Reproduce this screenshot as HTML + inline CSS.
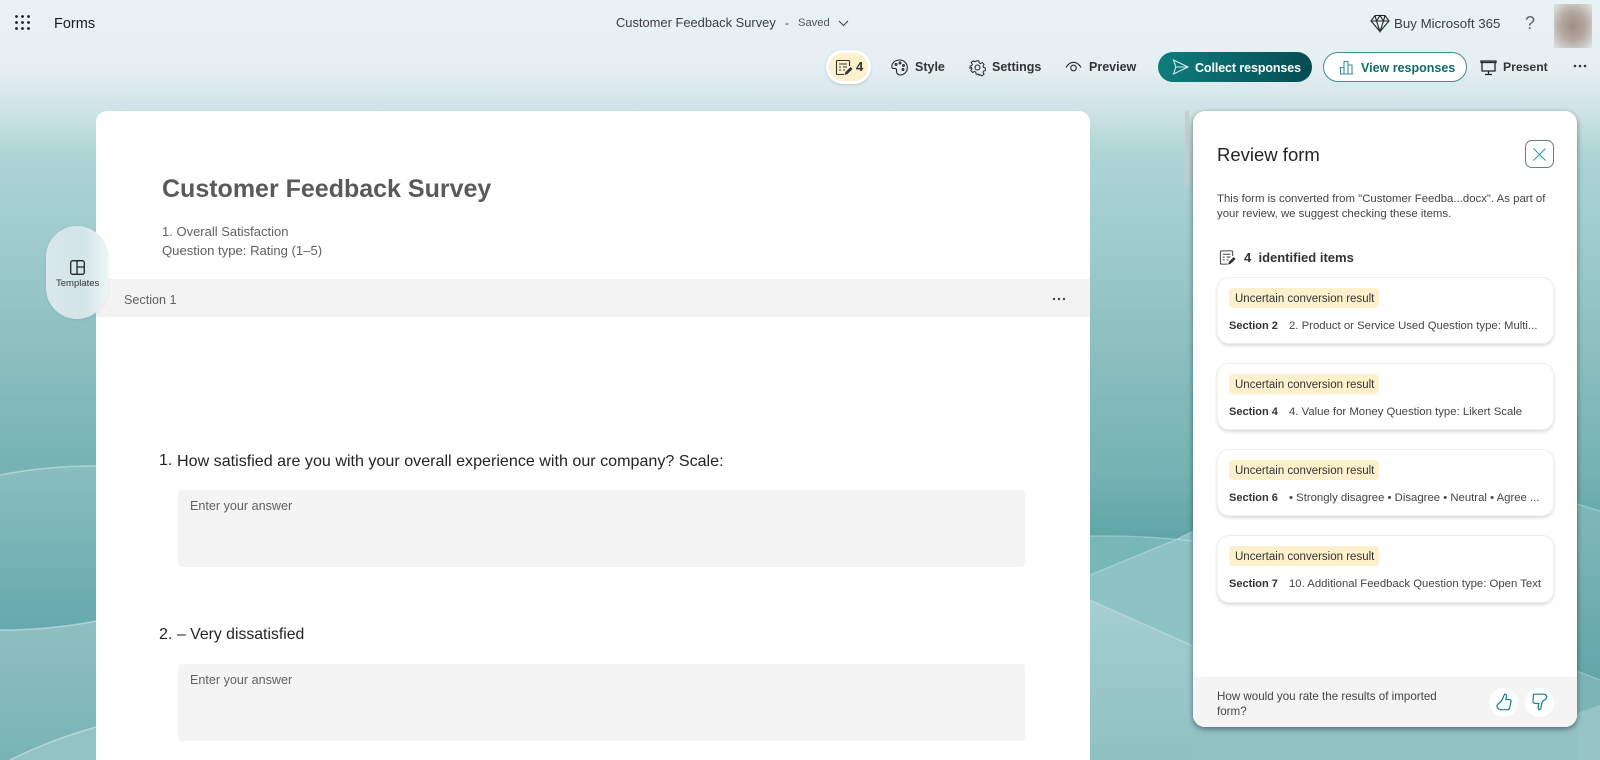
<!DOCTYPE html>
<html lang="en"><head><meta charset="utf-8"><title>Customer Feedback Survey</title>
<style>
*{box-sizing:border-box}
html,body{margin:0;padding:0;width:1600px;height:760px;overflow:hidden;background:#8fc1c3}
body{font-family:"Liberation Sans",sans-serif;position:relative;color:#242424}
.t{position:absolute;white-space:nowrap;line-height:18px}
.abs{position:absolute}
svg.ic{position:absolute;overflow:visible;fill:none;stroke:#242424;stroke-width:1.1}
.card{position:absolute;left:1217px;width:337px;height:67px;background:#fff;border:1px solid #f0f0f0;border-radius:12px;box-shadow:0 2px 3px rgba(0,0,0,.14)}
.tag{position:absolute;left:11px;top:10px;width:150px;height:20px;background:#fdf0cd;border-radius:4px;font-size:11.5px;line-height:22px;padding-left:6px;color:#333;white-space:nowrap}
.sec{position:absolute;left:11px;top:39px;font-size:11px;font-weight:bold;line-height:18px;color:#333;white-space:nowrap}
.val{position:absolute;left:71px;top:39px;font-size:11.35px;line-height:18px;color:#444;white-space:nowrap}
.box{position:absolute;left:178px;width:847px;height:77px;background:#f4f4f4;border-radius:4px}
.b{font-size:12.5px;font-weight:bold;color:#333}
</style></head><body>
<svg class="abs" style="left:0;top:0" width="1600" height="760" viewBox="0 0 1600 760">
<defs>
<linearGradient id="g0" x1="0" y1="0" x2="0" y2="760" gradientUnits="userSpaceOnUse">
<stop offset="0" stop-color="#e8f1f4"/><stop offset=".09" stop-color="#e5eff2"/><stop offset=".145" stop-color="#cfe3e6"/><stop offset=".2" stop-color="#afd5d5"/><stop offset=".45" stop-color="#8dc0c1"/><stop offset=".625" stop-color="#74b2b4"/><stop offset=".71" stop-color="#5fa5a8"/><stop offset="1" stop-color="#5fa5a8"/>
</linearGradient>
<linearGradient id="g1" x1="0" y1="466" x2="0" y2="630" gradientUnits="userSpaceOnUse"><stop offset="0" stop-color="#89bebf"/><stop offset="1" stop-color="#66a9ad"/></linearGradient>
<linearGradient id="g2" x1="0" y1="622" x2="0" y2="760" gradientUnits="userSpaceOnUse"><stop offset="0" stop-color="#8fbfc2"/><stop offset="1" stop-color="#78b4b6"/></linearGradient>
<linearGradient id="g3" x1="0" y1="600" x2="0" y2="760" gradientUnits="userSpaceOnUse"><stop offset="0" stop-color="#a5ced1"/><stop offset="1" stop-color="#8fc1c3"/></linearGradient>
<linearGradient id="g4" x1="0" y1="505" x2="0" y2="680" gradientUnits="userSpaceOnUse"><stop offset="0" stop-color="#80b8ba"/><stop offset="1" stop-color="#62a6a9"/></linearGradient>
</defs>
<rect width="1600" height="760" fill="url(#g0)"/>
<path d="M0 475Q45 466 96 466V760H0Z" fill="url(#g1)"/>
<path d="M0 630Q50 630 96 621V760H0Z" fill="url(#g2)"/>
<path d="M10 760Q50 740 96 727V760Z" fill="#94c3c5"/>
<path d="M0 475Q45 466 96 466M0 630Q50 630 96 621M10 760Q50 740 96 727" fill="none" stroke="#fff" stroke-opacity=".38" stroke-width="1.5"/>
<path d="M1090 536Q1140 535 1193 541V760H1090Z" fill="#78b7b8"/>
<path d="M1090 575L1175 540L1193 531V760H1090Z" fill="#8ec3c5"/>
<path d="M1090 600L1193 646V760H1090Z" fill="url(#g3)"/>
<path d="M1090 536Q1140 535 1193 541M1090 575L1175 540L1193 531M1090 600L1193 646" fill="none" stroke="#fff" stroke-opacity=".3" stroke-width="1.2"/>
<rect x="1193" y="700" width="384" height="60" fill="#92c2c4"/>
<path d="M1577 504L1600 511V680L1577 671Z" fill="url(#g4)"/>
<path d="M1577 671L1600 680V760H1577Z" fill="#7db5b7"/>
<path d="M1577 713L1600 705V760H1577Z" fill="#97c4c6"/>
<path d="M1577 504L1600 511M1577 671L1600 680" fill="none" stroke="#fff" stroke-opacity=".3" stroke-width="1.2"/>
</svg>

<!-- top bar -->
<svg class="abs" style="left:15px;top:15px" width="15" height="15" viewBox="0 0 15 15" fill="#1c1c1c"><circle cx="1.500" cy="1.500" r="1.400"/><circle cx="7.500" cy="1.500" r="1.400"/><circle cx="13.500" cy="1.500" r="1.400"/><circle cx="1.500" cy="7.500" r="1.400"/><circle cx="7.500" cy="7.500" r="1.400"/><circle cx="13.500" cy="7.500" r="1.400"/><circle cx="1.500" cy="13.500" r="1.400"/><circle cx="7.500" cy="13.500" r="1.400"/><circle cx="13.500" cy="13.500" r="1.400"/></svg>
<div class="t" style="left:54px;top:15px;font-size:14.5px;font-weight:500;color:#1a1a1a">Forms</div>
<div class="t" style="left:616px;top:14px;font-size:12.9px;color:#3d3d3d">Customer Feedback Survey</div>
<div class="t" style="left:785px;top:14px;font-size:12px;color:#444">-</div>
<div class="t" style="left:798px;top:14px;font-size:11.2px;color:#555">Saved</div>
<svg class="ic" style="left:838px;top:20px;stroke:#444" width="11" height="7" viewBox="0 0 11 7"><path d="M1 1l4.500 4.500L10 1"/></svg>

<svg class="ic" style="left:1370px;top:14px" width="20" height="19" viewBox="0 0 20 19"><path d="M5 1.500h10l4 5.500-9 10.500L1 7zM1 7h18M6.500 7L10 17.500 13.500 7M5 1.500L6.500 7 10 1.500 13.500 7 15 1.500"/></svg>
<div class="t" style="left:1394px;top:15px;font-size:13.3px;color:#3d3d3d">Buy Microsoft 365</div>
<div class="t" style="left:1525px;top:12px;font-size:18px;line-height:22px;color:#666">?</div>
<div class="abs" style="left:1554px;top:4px;width:38px;height:44px;background:radial-gradient(ellipse at 50% 50%,#a08e84 0%,#b3a79f 45%,#dfe5e6 100%)"></div>

<div class="abs" style="left:826px;top:50px;width:45px;height:34px;background:#fdf0cd;border:3px solid #fff;border-radius:17px;box-shadow:0 1px 3px rgba(0,0,0,.15)"></div>
<svg class="ic" style="left:835px;top:60px;stroke:#333" width="18" height="16" viewBox="0 0 18 16"><path d="M9 14.500H2.500a1 1 0 0 1-1-1V1.500a1 1 0 0 1 1-1h11a1 1 0 0 1 1 1V6M4 4h8M4 7h2M8 7h4M4 10h2M8 10h2"/><path d="M9.500 15l1-3 5-5 2 2-5 5z" fill="#333" stroke="none"/></svg>
<div class="t" style="left:856px;top:58px;font-size:13px;font-weight:bold;color:#333">4</div>

<svg class="ic" style="left:891px;top:59px" width="17" height="17" viewBox="0 0 17 17"><path d="M8.500 1C4 1 .8 4 .8 7.800c0 1.500 1.400 2 2.400 1.700 1.500-.4 2.700.5 2.300 2-.4 1.700.8 4.500 3.500 4.500 4 0 7.300-3.300 7.300-7.300S13.500 1 8.500 1z"/><circle cx="5" cy="5.500" r=".9"/><circle cx="9" cy="4" r=".9"/><circle cx="12.500" cy="6.500" r=".9"/><circle cx="12" cy="10.500" r=".9"/></svg>
<div class="t b" style="left:915px;top:58px">Style</div>

<svg class="ic" style="left:969px;top:59px" width="17" height="17" viewBox="0 0 17 17"><circle cx="8.500" cy="8.500" r="2.500"/><path d="M7 1h3l.5 2.300 1.500.7 2-1.200 2 2.200-1.200 2 .6 1.500 2 .5v3l-2 .5-.6 1.500 1.200 2-2.200 2-2-1.200-1.300.6L10 16H7l-.5-2.300-1.500-.7-2 1.200-2-2.200 1.200-2-.6-1.500L0 9.500v-2.600l2-.5.600-1.500-1.200-2 2.200-2 2 1.200 1.300-.6z" transform="translate(1 1) scale(.88)"/></svg>
<div class="t b" style="left:992px;top:58px">Settings</div>

<svg class="ic" style="left:1065px;top:61px" width="17" height="11" viewBox="0 0 17 11"><path d="M1 6.500C3 3 5.500 1.300 8.500 1.300S14 3 16 6.500"/><circle cx="8.500" cy="7" r="2.800"/></svg>
<div class="t b" style="left:1089px;top:58px">Preview</div>

<div class="abs" style="left:1158px;top:52px;width:154px;height:30px;border-radius:15px;background:linear-gradient(90deg,#0e7d7c,#064c52)"></div>
<svg class="ic" style="left:1172px;top:59px;stroke:#d5ecec" width="17" height="16" viewBox="0 0 17 16"><path d="M1.500 1l14.500 7-14.500 7L3.800 8zM3.800 8H16"/></svg>
<div class="t" style="left:1195px;top:59px;font-size:12.5px;letter-spacing:-.1px;font-weight:bold;color:#fff">Collect responses</div>

<div class="abs" style="left:1323px;top:52px;width:144px;height:30px;border-radius:15px;background:#fff;border:1px solid #3f8f90"></div>
<svg class="ic" style="left:1339px;top:60px;stroke:#3f8f90" width="15" height="15" viewBox="0 0 15 15"><path d="M1 14h13M1.500 14V7.500h3.500V14M5 14V1.500h4V14M9 14V5h4V14"/></svg>
<div class="t" style="left:1361px;top:59px;font-size:12.5px;font-weight:bold;color:#0f6c6c">View responses</div>

<svg class="ic" style="left:1480px;top:60px;stroke-width:1.300" width="17" height="16" viewBox="0 0 17 16"><path d="M1 1h15v1.500H1zM2 2.500V11h13V2.500M8.500 11v3.500M5 14.500h7"/></svg>
<div class="t b" style="left:1503px;top:58px;font-size:12.2px">Present</div>
<svg class="abs" style="left:1573px;top:64px" width="14" height="4" viewBox="0 0 14 4" fill="#333"><circle cx="2" cy="2" r="1.300"/><circle cx="7" cy="2" r="1.300"/><circle cx="12" cy="2" r="1.300"/></svg>

<!-- form card -->
<div class="abs" style="left:96px;top:111px;width:994px;height:660px;background:#fff;border-radius:11px"></div>
<div class="t" style="left:162px;top:171px;font-size:25px;line-height:36px;font-weight:bold;color:#5a5a5a">Customer Feedback Survey</div>
<div class="t" style="left:162px;top:223px;font-size:13px;color:#616161">1. Overall Satisfaction</div>
<div class="t" style="left:162px;top:242px;font-size:13.1px;color:#616161">Question type: Rating (1–5)</div>
<div class="abs" style="left:96px;top:279px;width:994px;height:38px;background:#f3f3f3"></div>
<div class="t" style="left:124px;top:291px;font-size:12.6px;color:#616161">Section 1</div>
<svg class="abs" style="left:1052px;top:297px" width="14" height="4" viewBox="0 0 14 4" fill="#444"><circle cx="2" cy="2" r="1.200"/><circle cx="7" cy="2" r="1.200"/><circle cx="12" cy="2" r="1.200"/></svg>

<div class="t" style="left:159px;top:451px;font-size:16px;line-height:20px;color:#242424">1.</div>
<div class="t" style="left:177px;top:451px;font-size:16.1px;line-height:20px;color:#242424">How satisfied are you with your overall experience with our company? Scale:</div>
<div class="box" style="top:490px"></div>
<div class="t" style="left:190px;top:497px;font-size:12.6px;color:#616161">Enter your answer</div>
<div class="t" style="left:159px;top:625px;font-size:16px;line-height:20px;color:#242424">2.</div>
<div class="t" style="left:177px;top:625px;font-size:15.8px;line-height:20px;color:#242424">– Very dissatisfied</div>
<div class="box" style="top:664px"></div>
<div class="t" style="left:190px;top:671px;font-size:12.6px;color:#616161">Enter your answer</div>

<!-- templates pill -->
<div class="abs" style="left:46px;top:226px;width:62px;height:93px;border-radius:31px;background:linear-gradient(90deg,#d9e8ea,#d2e5e7 60%,#edf4f5);box-shadow:0 1px 3px rgba(0,0,0,.08)"></div>
<svg class="ic" style="left:70px;top:260px;stroke-width:1.300" width="15" height="15" viewBox="0 0 15 15"><rect x=".7" y=".7" width="13.600" height="13.600" rx="2"/><path d="M7 .7v13.600M7 7h7.300"/></svg>
<div class="t" style="left:56px;top:276px;font-size:9.5px;line-height:16px;color:#333">Templates</div>

<!-- scrollbar -->
<div class="abs" style="left:1185px;top:111px;width:4px;height:75px;background:#c6cdcd;border-radius:2px"></div>

<!-- review panel -->
<div class="abs" style="left:1193px;top:111px;width:384px;height:616px;background:#fff;border-radius:12px;overflow:hidden;box-shadow:0 2px 6px rgba(0,0,0,.45)">
<div class="abs" style="left:0;top:566px;width:384px;height:50px;background:#f4f4f4"></div>
</div>
<div class="t" style="left:1217px;top:143px;font-size:18.5px;line-height:24px;color:#242424">Review form</div>
<div class="abs" style="left:1525px;top:140px;width:29px;height:28px;border:1px solid #6d7b7b;border-radius:7px"></div>
<svg class="ic" style="left:1533px;top:148px;stroke:#2a9494;stroke-width:.9" width="13" height="13" viewBox="0 0 13 13"><path d="M.5.5l12 12M12.500.5l-12 12"/></svg>
<div class="t" style="left:1217px;top:190px;font-size:11.4px;color:#444">This form is converted from "Customer Feedba...docx". As part of</div>
<div class="t" style="left:1217px;top:205px;font-size:11.4px;color:#444">your review, we suggest checking these items.</div>
<svg class="ic" style="left:1219px;top:250px;stroke:#444" width="17" height="16" viewBox="0 0 18 16"><path d="M9 14.500H2.500a1 1 0 0 1-1-1V1.500a1 1 0 0 1 1-1h11a1 1 0 0 1 1 1V6M4 4h8M4 7h2M8 7h4M4 10h2M8 10h2"/><path d="M9.500 15l1-3 5-5 2 2-5 5z" fill="#333" stroke="none"/></svg>
<div class="t" style="left:1244px;top:249px;font-size:13px;font-weight:bold;color:#333">4&nbsp;&nbsp;identified items</div>

<div class="card" style="top:277px"><div class="tag">Uncertain conversion result</div><div class="sec">Section 2</div><div class="val">2. Product or Service Used Question type: Multi...</div></div>
<div class="card" style="top:363px"><div class="tag">Uncertain conversion result</div><div class="sec">Section 4</div><div class="val">4. Value for Money Question type: Likert Scale</div></div>
<div class="card" style="top:449px"><div class="tag">Uncertain conversion result</div><div class="sec">Section 6</div><div class="val">• Strongly disagree • Disagree • Neutral • Agree ...</div></div>
<div class="card" style="top:535px;height:68px"><div class="tag">Uncertain conversion result</div><div class="sec">Section 7</div><div class="val">10. Additional Feedback Question type: Open Text</div></div>

<div class="t" style="left:1217px;top:688px;font-size:11.6px;color:#444">How would you rate the results of imported</div>
<div class="t" style="left:1217px;top:703px;font-size:11.6px;color:#444">form?</div>
<div class="abs" style="left:1489px;top:688px;width:29px;height:29px;border-radius:50%;background:#fff"></div>
<div class="abs" style="left:1525px;top:688px;width:29px;height:29px;border-radius:50%;background:#fff"></div>
<svg class="ic" style="left:1496px;top:693px;stroke:#1a8080;stroke-width:1.200" width="16" height="18" viewBox="0 0 16 18"><path d="M8.500 1.200C10 .8 10.800 2 10.500 3.500L9.800 6.500h3.500c1.300 0 2 1 1.700 2.200l-1.300 6c-.3 1.300-1.200 2-2.500 2H5c-1.500 0-2.500-.7-3.500-2-.8-1.300-.6-2.500.3-3.300C3.500 10 6 7.500 7 5z"/></svg>
<svg class="ic" style="left:1532px;top:693px;stroke:#1a8080;stroke-width:1.200" width="16" height="18" viewBox="0 0 16 18"><path d="M1.500 1.200h10.500c1 0 2 .6 2.500 1.800.5 1.300 0 2.500-1 3.200l-2.500 1.800c-1 .8-1.500 3-1.800 5.500-.2 1.800-.8 3.300-2 3.300-.9 0-1.200-1-1-2.300l.6-4H3.500C2 10.500.8 9.500 1 8z"/></svg>
</body></html>
